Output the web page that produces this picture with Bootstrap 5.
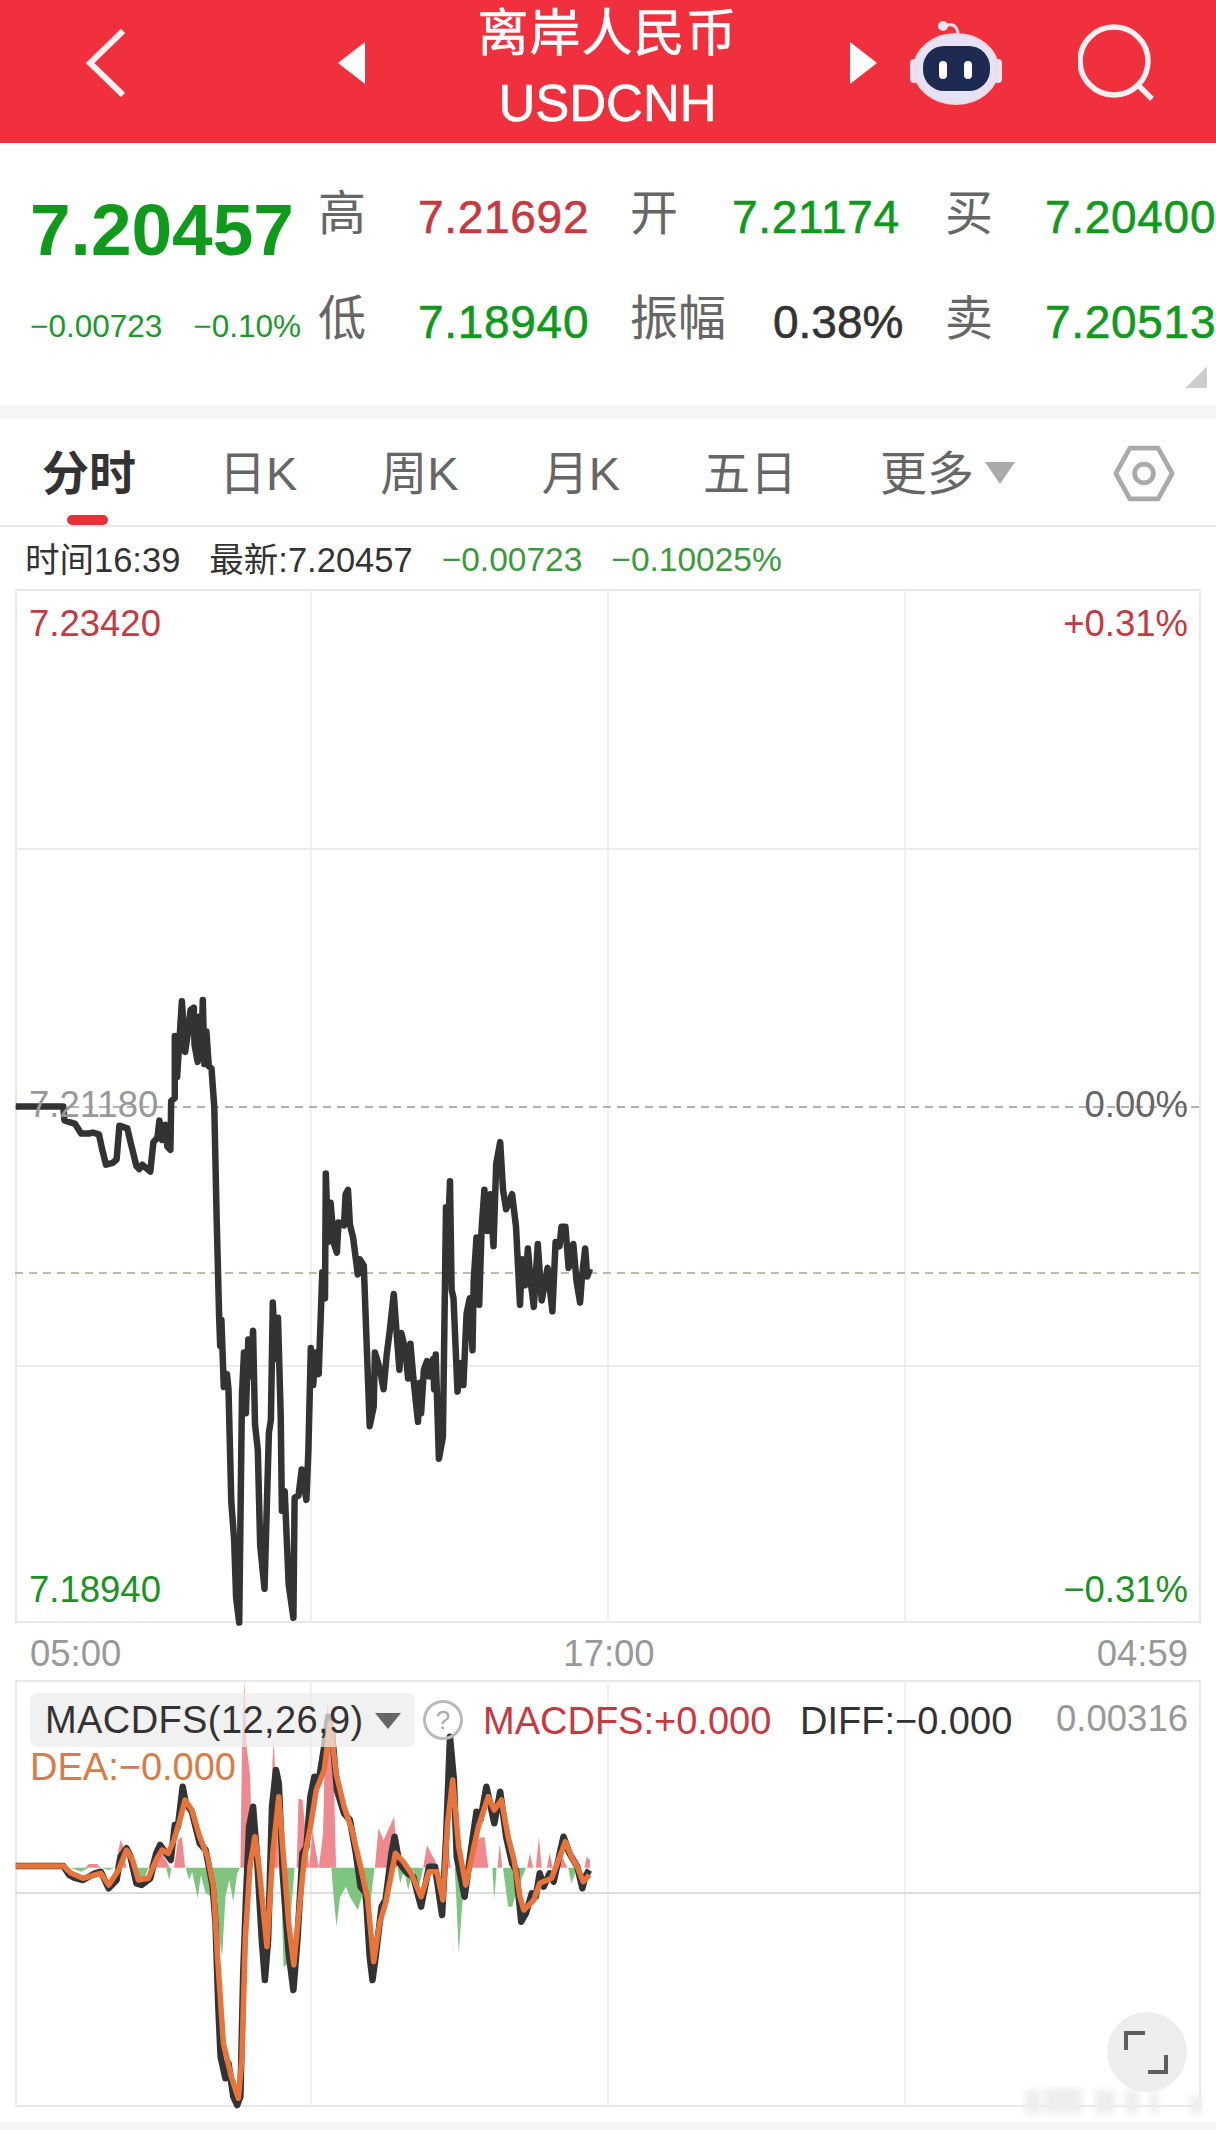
<!DOCTYPE html>
<html lang="zh-CN">
<head>
    <meta charset="UTF-8"/>
    <title>离岸人民币 USDCNH</title>
    <link rel="stylesheet" href="https://cdn.jsdelivr.net/npm/bootstrap@5.3.0/dist/css/bootstrap.min.css">
    <style>
        body {
            background: #fff;
            font-family: "Liberation Sans", "Noto Sans CJK SC", sans-serif;
            width: 1216px;
            overflow-x: hidden;
        }

        /* header */
        .top-bar { height: 143px; background: #f1303e; color: #fff; padding: 0 0 18px 85px; }
        .tri-left { margin-left: 213px; }
        .title-box { width: 485px; margin-top: 12px; font-size: 51px; line-height: 70px; -webkit-text-stroke: .6px currentColor; }
        .title-box div:first-child { letter-spacing: 1px; }
        .robot-icon { margin-left: 33px; }
        .search-icon { margin-left: 76px; }

        /* quote block */
        .quote-panel { height: 262px; padding: 19px 0 0 30px; position: relative; }
        .quote-left { width: 288px; }
        .last-price { margin-top: 28px; font-size: 73px; line-height: 80px; font-weight: 700; color: #0f9a1c; }
        .price-change { margin-top: 36px; font-size: 31.5px; line-height: 40px; color: #1a9a2a; gap: 31px; }
        .quote-grid {
            display: grid;
            grid-template-columns: 100px 212px 102px 213px 100px 170px;
            grid-auto-rows: 105px;
            align-items: center;
            white-space: nowrap;
        }
        .q-label { font-size: 48px; color: #666; margin-top: -2px; }
        .q-val { font-size: 46px; letter-spacing: .7px; margin-top: 5px; color: #0f9a1c; -webkit-text-stroke: .6px currentColor; }
        .q-val.up { color: #c8383f; }
        .q-val.flat { color: #333; padding-left: 41px; letter-spacing: 0; }
        .corner-mark {
            position: absolute; left: 1185px; top: 224px;
            width: 22px; height: 21px;
            background: linear-gradient(135deg, transparent 50%, #ccc 50%);
        }
        .band { height: 14px; background: #f5f5f5; }

        /* period tabs */
        .tab-bar { height: 108px; padding-left: 42px; gap: 83px; border-bottom: 2px solid #e8e8e8; }
        .tab-item { position: relative; font-size: 47px; line-height: 110px; height: 106px; color: #666; white-space: nowrap; }
        .tab-item.active { font-weight: 700; color: #333; }
        .tab-item.active::after {
            content: ""; position: absolute; left: 25px; bottom: 0;
            width: 41px; height: 10px; border-radius: 5px; background: #e8303a;
        }
        .more-caret {
            display: inline-block; margin-left: 11px; vertical-align: 6px;
            border-left: 15px solid transparent; border-right: 15px solid transparent;
            border-top: 22px solid #aaa;
        }
        .hex-icon { margin-left: auto; margin-right: 41px; margin-top: 26px; }

        .info-row { height: 62px; padding-left: 25px; font-size: 34.5px; line-height: 66px; color: #333; gap: 29px; white-space: nowrap; }
        .info-green { color: #3c9a3c; font-size: 33.5px; }

        /* charts */
        .chart-box { position: relative; margin-left: 15px; width: 1186px; }
        .chart-box svg.plot { display: block; overflow: visible; }
        .price-chart { height: 1034px; }
        .macd-chart { height: 427px; }
        .chart-label { position: absolute; font-size: 36.5px; line-height: 40px; white-space: nowrap; }
        .c-red { color: #c8383f; }
        .c-green { color: #1a9322; }
        .c-grey { color: #999; }
        .c-mid { color: #666; }
        .axis-row { width: 1186px; margin-left: 15px; height: 57px; padding: 0 13px 0 15px; font-size: 36.5px; line-height: 62px; color: #999; }

        .macd-pill {
            position: absolute; left: 15px; top: 13px; width: 385px; height: 54px;
            background: rgba(235, 235, 235, .72); border-radius: 8px;
            padding-left: 15px; font-size: 38px; line-height: 54px; letter-spacing: .4px; color: #333;
        }
        .pill-caret {
            position: absolute; left: 345px; top: 20px;
            border-left: 13px solid transparent; border-right: 13px solid transparent;
            border-top: 16px solid #666;
        }
        .help-dot {
            position: absolute; left: 408px; top: 20px; width: 40px; height: 40px;
            border: 3px solid #bbb; color: #aaa; font-size: 26px; line-height: 34px; text-align: center;
        }
        .macd-text { font-size: 38px; line-height: 44px; }
        .expand-btn {
            position: absolute; left: 1092px; top: 332px; width: 80px; height: 80px;
            background: #eee; opacity: .95;
        }
        .foot-gap { height: 15px; }
        .foot-band { height: 8px; background: #f5f5f5; }
    </style>
</head>
<body>

<!-- Header -->
<header class="top-bar d-flex align-items-center">
    <svg width="40" height="68" viewBox="0 0 40 68"><path d="M38 2 5 34l33 32" fill="none" stroke="#fdeff0" stroke-width="6"/></svg>
    <svg class="tri-left" width="27" height="42" viewBox="0 0 27 42"><path d="M27 0v42L0 21z" fill="#fff"/></svg>
    <div class="title-box text-center">
        <div>离岸人民币</div>
        <div>USDCNH</div>
    </div>
    <svg width="27" height="42" viewBox="0 0 27 42"><path d="M0 0v42l27-21z" fill="#fff"/></svg>
    <svg class="robot-icon" width="92" height="84" viewBox="0 0 92 84">
        <path d="M35 5c8-3 12 0 13 8" fill="none" stroke="#f4dfe6" stroke-width="3"/>
        <circle cx="33" cy="5" r="5" fill="#f6e4ea"/>
        <rect x="0" y="38" width="8" height="24" rx="4" fill="#efe3f4"/>
        <rect x="84" y="38" width="8" height="24" rx="4" fill="#efe3f4"/>
        <ellipse cx="46" cy="48" rx="42" ry="35" fill="#e6e2f6" stroke="#f8d8e0" stroke-width="2"/>
        <rect x="13" y="25" width="67" height="45" rx="21" fill="#1f2a52"/>
        <rect x="29" y="40" width="8" height="18" rx="4" fill="#fff"/>
        <rect x="54" y="40" width="8" height="18" rx="4" fill="#fff"/>
    </svg>
    <svg class="search-icon" width="78" height="78" viewBox="0 0 78 78">
        <circle cx="36" cy="37" r="34" fill="none" stroke="#fdeff0" stroke-width="5.5"/>
        <path d="M60 61l14 14" stroke="#fdeff0" stroke-width="5.5"/>
    </svg>
</header>

<!-- Quote summary -->
<section class="quote-panel d-flex">
    <div class="quote-left">
        <div class="last-price">7.20457</div>
        <div class="price-change d-flex"><span>−0.00723</span><span>−0.10%</span></div>
    </div>
    <div class="quote-grid">
        <span class="q-label">高</span><span class="q-val up">7.21692</span>
        <span class="q-label">开</span><span class="q-val">7.21174</span>
        <span class="q-label">买</span><span class="q-val">7.20400</span>
        <span class="q-label">低</span><span class="q-val">7.18940</span>
        <span class="q-label">振幅</span><span class="q-val flat">0.38%</span>
        <span class="q-label">卖</span><span class="q-val">7.20513</span>
    </div>
    <div class="corner-mark"></div>
</section>
<div class="band"></div>

<!-- Period tabs -->
<div class="tab-bar d-flex align-items-start">
    <div class="tab-item active">分时</div>
    <div class="tab-item">日K</div>
    <div class="tab-item">周K</div>
    <div class="tab-item">月K</div>
    <div class="tab-item">五日</div>
    <div class="tab-item">更多<span class="more-caret"></span></div>
    <svg class="hex-icon" width="62" height="57" viewBox="0 0 66 60">
        <path d="M3 30 18 3h30l15 27-15 27H18z" fill="none" stroke="#aaa" stroke-width="5" stroke-linejoin="round"/>
        <circle cx="33" cy="30" r="10" fill="none" stroke="#aaa" stroke-width="5"/>
    </svg>
</div>

<div class="info-row d-flex">
    <span>时间16:39</span>
    <span>最新:7.20457</span>
    <span class="info-green">−0.00723</span>
    <span class="info-green">−0.10025%</span>
</div>

<!-- Price chart, svg uses page coordinates -->
<div class="chart-box price-chart">
    <svg class="plot" width="1186" height="1034" viewBox="15 589 1186 1034">
        <rect x="16" y="590" width="1184" height="1032" fill="none" stroke="#e8e8e8" stroke-width="2"/>
        <path d="M311 589v1034M608 589v1034M905 589v1034" stroke="#ececec" stroke-width="1.5"/>
        <path d="M15 849h1186M15 1366h1186" stroke="#ececec" stroke-width="2"/>
        <path d="M15 1107h1186" stroke="#999" stroke-width="1.5" stroke-dasharray="8 6"/>
        <path d="M15 1273h1186" stroke="#a8a88c" stroke-width="1.5" stroke-dasharray="8 6"/>
        <path id="priceLine" fill="none" stroke="#333" stroke-width="6.5" stroke-linejoin="round"/>
    </svg>
    <span class="chart-label c-red" style="left:14px;top:15px">7.23420</span>
    <span class="chart-label c-red" style="right:13px;top:15px">+0.31%</span>
    <span class="chart-label c-grey" style="left:14px;top:496px">7.21180</span>
    <span class="chart-label c-mid" style="right:13px;top:496px">0.00%</span>
    <span class="chart-label c-green" style="left:14px;top:981px">7.18940</span>
    <span class="chart-label c-green" style="right:13px;top:981px">−0.31%</span>
</div>

<div class="axis-row d-flex justify-content-between">
    <span>05:00</span><span>17:00</span><span>04:59</span>
</div>

<!-- MACD chart -->
<div class="chart-box macd-chart">
    <svg class="plot" width="1186" height="427" viewBox="15 1680 1186 427">
        <defs><filter id="smudge"><feGaussianBlur stdDeviation="3"/></filter></defs>
        <rect x="16" y="1681" width="1184" height="425" fill="none" stroke="#e8e8e8" stroke-width="2"/>
        <path d="M311 1680v427M608 1680v427M905 1680v427" stroke="#ececec" stroke-width="1.5"/>
        <path d="M15 1893h1186" stroke="#ddd" stroke-width="2"/>
        <g id="macdBars"></g>
        <path id="diffLine" fill="none" stroke="#333" stroke-width="6.5" stroke-linejoin="round"/>
        <path id="deaLine" fill="none" stroke="#e8743b" stroke-width="5.5" stroke-linejoin="round"/>
        <g filter="url(#smudge)" fill="#eee">
            <rect x="1025" y="2090" width="16" height="24"/>
            <rect x="1045" y="2088" width="37" height="26"/>
            <rect x="1095" y="2090" width="20" height="24"/>
            <rect x="1125" y="2090" width="14" height="24"/>
            <rect x="1150" y="2090" width="8" height="24"/>
            <rect x="1190" y="2095" width="12" height="20"/>
        </g>
    </svg>
    <div class="macd-pill">MACDFS(12,26,9)<span class="pill-caret"></span></div>
    <span class="help-dot rounded-circle">?</span>
    <span class="chart-label macd-text c-red" style="left:468px;top:19px">MACDFS:+0.000</span>
    <span class="chart-label macd-text" style="left:785px;top:19px;color:#333">DIFF:−0.000</span>
    <span class="chart-label c-grey" style="right:13px;top:19px">0.00316</span>
    <span class="chart-label macd-text" style="left:15px;top:65px;color:#d97b48">DEA:−0.000</span>
    <div class="expand-btn rounded-circle">
        <svg width="80" height="80" viewBox="0 0 80 80">
            <path d="M19 38V21h19M41 60h18V43" fill="none" stroke="#555" stroke-width="4"/>
        </svg>
    </div>
</div>

<div class="foot-gap"></div>
<div class="foot-band"></div>

<script src="https://cdn.jsdelivr.net/npm/bootstrap@5.3.0/dist/js/bootstrap.bundle.min.js"></script>
<script>
    // Points traced from zoomed crops, converted to page coordinates below
    const pricePts = [[40,338],[160,338],[163,370],[180,375],[190,378],[205,400],[225,400],[235,398],[250,402],[258,435],[268,472],[285,468],[295,460],[302,382],[322,388],[330,420],[345,475],[352,482],[360,472],[380,488],[388,420],[398,410],[403,370],[410,415],[418,380],[423,430],[431,438],[433,325],[442,318],[442,175],[448,270],[460,95],[468,212],[475,170],[482,115],[490,110],[492,195],[500,235],[505,130],[510,190],[513,92],[517,240],[522,165],[528,245],[535,250],[542,340],[548,600],[554,820],[557,890],[560,830],[566,985],[574,955],[578,990],[585,1250],[592,1335],[597,1470],[605,1528],[612,1000],[617,905],[622,1045],[628,875],[634,960],[640,855],[645,1070],[652,1130],[658,1350],[669,1450],[680,1090],[685,1060],[690,790],[696,920],[703,825],[710,1050],[713,1270],[720,1225],[730,1440],[742,1517],[745,1240],[755,1235],[763,1175],[775,1245],[780,1130],[786,895],[792,980],[798,905],[806,955],[815,720],[822,780],[824,492],[830,650],[836,560],[845,655],[852,675],[856,605],[870,612],[874,540],[880,530],[885,610],[893,640],[905,725],[910,690],[920,705],[928,900],[935,1075],[945,1030],[948,905],[955,925],[962,950],[970,990],[978,910],[985,860],[996,770],[1003,860],[1010,945],[1015,860],[1025,900],[1032,965],[1038,885],[1045,960],[1057,1065],[1062,975],[1065,1045],[1072,945],[1080,925],[1085,960],[1095,920],[1098,990],[1102,910],[1110,1150],[1120,1100],[1128,570],[1132,660],[1138,510],[1142,760],[1147,780],[1157,995],[1165,930],[1172,980],[1180,815],[1188,780],[1195,900],[1198,740],[1205,640],[1212,795],[1218,620],[1225,530],[1232,625],[1240,540],[1248,660],[1255,470],[1265,420],[1272,530],[1280,575],[1295,540],[1305,615],[1315,795],[1320,690],[1328,750],[1335,665],[1342,740],[1350,800],[1360,655],[1370,785],[1385,710],[1397,810],[1405,650],[1415,660],[1420,615],[1430,615],[1438,710],[1450,655],[1458,740],[1467,790],[1472,730],[1480,665],[1485,730],[1492,712]];
    const diffPts = [[40,678],[160,678],[175,705],[185,712],[210,720],[240,700],[255,695],[275,745],[295,720],[305,650],[320,625],[330,650],[345,730],[358,735],[380,715],[395,640],[405,615],[420,640],[432,660],[442,555],[450,560],[462,440],[470,490],[485,515],[505,610],[520,630],[538,740],[545,850],[552,1100],[558,1250],[570,1315],[578,1270],[590,1370],[600,1395],[608,1370],[615,1000],[622,780],[630,560],[640,500],[650,650],[662,900],[670,1020],[678,900],[688,500],[698,390],[705,430],[715,700],[730,940],[742,1050],[752,900],[765,640],[775,620],[785,470],[795,410],[805,430],[820,320],[830,230],[840,280],[852,450],[870,520],[885,540],[900,640],[912,740],[925,760],[935,950],[942,1020],[950,950],[965,800],[975,780],[990,640],[998,590],[1010,670],[1030,700],[1045,710],[1065,800],[1085,680],[1100,680],[1118,825],[1128,600],[1138,290],[1148,420],[1155,650],[1175,770],[1190,640],[1205,515],[1215,540],[1230,440],[1250,550],[1265,455],[1280,590],[1295,670],[1305,690],[1318,845],[1330,820],[1345,760],[1355,770],[1365,700],[1375,740],[1390,700],[1400,725],[1425,590],[1440,640],[1460,680],[1473,745],[1480,710],[1490,690]];
    const deaPts = [[40,678],[160,678],[180,700],[210,715],[240,705],[255,700],[275,735],[300,690],[320,630],[335,660],[350,720],[375,715],[395,660],[410,630],[425,640],[440,600],[455,540],[468,480],[485,510],[505,590],[525,650],[540,740],[550,950],[565,1210],[585,1310],[603,1375],[612,1250],[620,900],[632,680],[645,590],[655,680],[675,920],[690,640],[705,470],[715,620],[730,850],[743,975],[755,830],[770,650],[785,560],[800,450],[820,390],[835,250],[850,400],[870,500],[890,570],[912,680],[930,780],[945,965],[960,850],[975,790],[990,700],[1000,640],[1020,665],[1040,700],[1065,770],[1085,695],[1105,695],[1120,780],[1132,550],[1145,420],[1160,620],[1178,735],[1195,640],[1210,560],[1235,470],[1250,510],[1268,480],[1285,590],[1300,660],[1315,770],[1325,810],[1350,780],[1365,730],[1395,715],[1430,605],[1445,650],[1460,680],[1475,725],[1490,705]];

    const redBars = [
        [215,683,225,672,245,672,255,683],[290,683,305,600,312,620,320,683],[375,683,385,650,395,630,410,640,430,683],
        [440,683,450,600,460,590,468,683],[608,683,612,320,618,120,624,320,632,400,640,683],[680,683,688,400,692,295,698,450,705,683],
        [750,683,755,475,765,480,775,600,782,683],[782,683,790,570,800,640,806,683],[806,683,815,600,826,470,832,640,836,683],
        [815,683,822,320,828,190,838,320,845,450,850,683],[948,683,957,565,970,600,985,560,997,530,1005,683],
        [1070,683,1080,615,1090,640,1100,660,1105,683],[1125,683,1130,600,1140,683],[1180,683,1190,570,1200,600,1225,590,1235,683],
        [1258,683,1264,610,1270,683],[1333,683,1340,640,1348,683],[1355,683,1363,590,1370,683],[1383,683,1390,640,1398,683],
        [1403,683,1410,620,1435,683],[1478,683,1484,650,1492,660,1492,683]
    ];
    const greenBars = [
        [178,683,205,695,225,683],[255,683,275,690,290,683],[335,683,345,740,360,735,375,683],[420,683,428,720,434,683],
        [470,683,478,720,486,695,500,775,508,705,520,760,535,770,548,780,555,900,562,950,570,770,580,720,590,785,600,700,607,683],
        [710,683,717,980,725,975,745,683],[838,683,843,760,851,860,860,770,875,740,885,770,905,810,915,770,930,860,947,683],
        [1005,683,1012,730,1022,690,1032,750,1045,690,1060,740,1070,683],[1150,683,1155,800,1160,940,1170,780,1180,683],
        [1245,683,1250,780,1256,683],[1272,683,1285,800,1295,800,1305,760,1330,683],[1437,683,1445,730,1455,700,1470,683]
    ];

    const px = x => (x / 2.529).toFixed(1);
    const priceY = y => (960 + y / 2.306).toFixed(1);
    const macdY = y => (1640 + y / 3).toFixed(1);

    function toPath(pts, yFn) {
        return 'M' + pts.map(p => px(p[0]) + ' ' + yFn(p[1])).join('L');
    }

    document.getElementById('priceLine').setAttribute('d', toPath(pricePts, priceY));
    document.getElementById('diffLine').setAttribute('d', toPath(diffPts, macdY));
    document.getElementById('deaLine').setAttribute('d', toPath(deaPts, macdY));

    function drawBars(list, color) {
        let out = '';
        list.forEach(flat => {
            const pts = [];
            for (let i = 0; i < flat.length; i += 2) pts.push(px(flat[i]) + ',' + macdY(flat[i + 1]));
            out += `<polygon points="${pts.join(' ')}" fill="${color}"/>`;
        });
        return out;
    }
    document.getElementById('macdBars').innerHTML = drawBars(redBars, '#ee8a8f') + drawBars(greenBars, '#7fc47f');
</script>
</body>
</html>
